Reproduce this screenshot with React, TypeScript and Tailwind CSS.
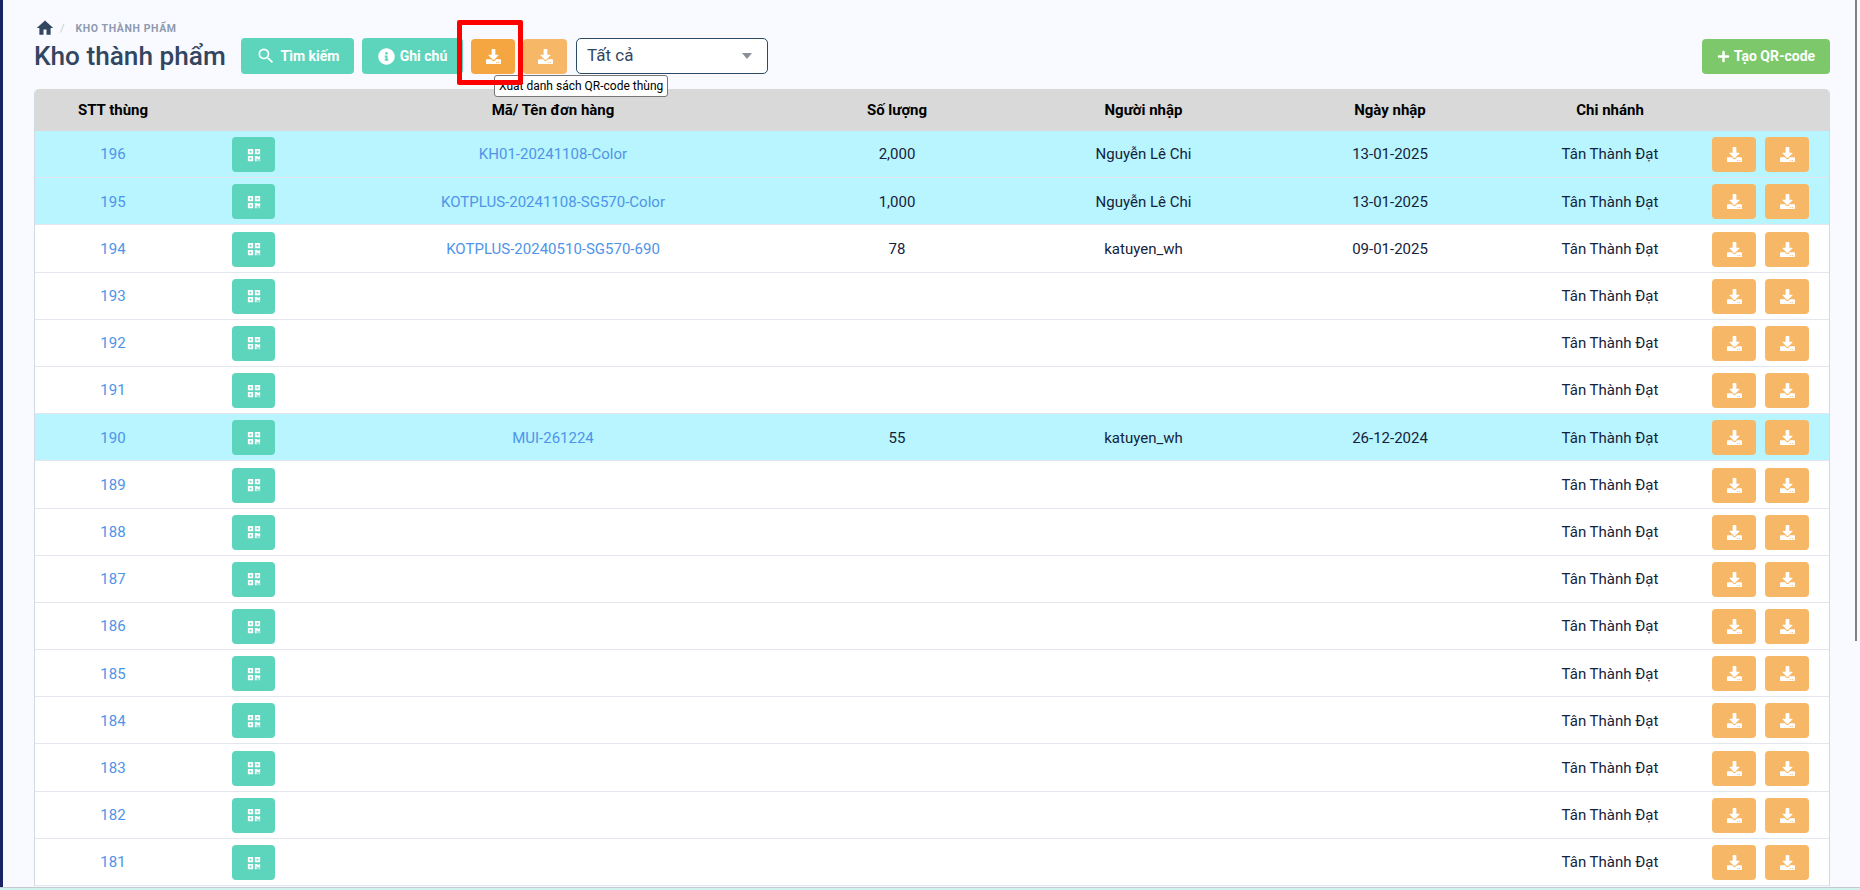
import { FaDownload, FaInfoCircle, FaPlus, FaQrcode } from 'react-icons/fa';
import { MdSearch } from 'react-icons/md';

const FONT = "font-['Roboto','Liberation_Sans',sans-serif]";

type Row = {
  stt: number;
  code?: string;
  qty?: string;
  user?: string;
  date?: string;
};

const rows: Row[] = [
  { stt: 196, code: 'KH01-20241108-Color', qty: '2,000', user: 'Nguyễn Lê Chi', date: '13-01-2025' },
  { stt: 195, code: 'KOTPLUS-20241108-SG570-Color', qty: '1,000', user: 'Nguyễn Lê Chi', date: '13-01-2025' },
  { stt: 194, code: 'KOTPLUS-20240510-SG570-690', qty: '78', user: 'katuyen_wh', date: '09-01-2025' },
  { stt: 193 },
  { stt: 192 },
  { stt: 191 },
  { stt: 190, code: 'MUI-261224', qty: '55', user: 'katuyen_wh', date: '26-12-2024' },
  { stt: 189 },
  { stt: 188 },
  { stt: 187 },
  { stt: 186 },
  { stt: 185 },
  { stt: 184 },
  { stt: 183 },
  { stt: 182 },
  { stt: 181 },
];

const isFilled = (r: Row) => r.stt === 196 || r.stt === 195 || r.stt === 190;

const GRID = 'grid grid-cols-[147px_143px_456px_232px_261px_232px_206px_117px]';

const HomeIcon = () => (
  <svg viewBox="0 0 24 24" className="h-[18px] w-[18px]" fill="#32465f">
    <path d="M10 21v-7h4v7h5.5v-9H23L12 2 1 12h3.5v9z" />
  </svg>
);

const TableRow = ({ row }: { row: Row }) => (
  <div
    className={`${GRID} h-[47.2px] items-center border-b border-[#e3e6ec] pt-[1.2px] text-[15px] text-[#14233c] ${
      isFilled(row) ? 'bg-[#b8f5ff]' : 'bg-white'
    }`}
  >
    <a className="pl-[9px] text-center text-[#4f94e8]">{row.stt}</a>
    <div className="flex justify-center">
      <button className="flex h-[35px] w-[43px] items-center justify-center rounded-[4px] bg-[#5dd5bc] text-white">
        <FaQrcode size={14} />
      </button>
    </div>
    <a className="text-center text-[#4f94e8]">{row.code}</a>
    <div className="text-center">{row.qty}</div>
    <div className="text-center">{row.user}</div>
    <div className="text-center">{row.date}</div>
    <div className="pl-[2px] text-center">Tân Thành Đạt</div>
    <div className="flex gap-[9px]">
      <button className="flex h-[35px] w-[44px] items-center justify-center rounded-[4px] bg-[#f6b767] text-white">
        <FaDownload size={15} />
      </button>
      <button className="flex h-[35px] w-[44px] items-center justify-center rounded-[4px] bg-[#f6b767] text-white">
        <FaDownload size={15} />
      </button>
    </div>
  </div>
);

export default function App() {
  return (
    <div className={`${FONT} relative flex h-[890px] w-[1860px] overflow-hidden bg-[#f9faff]`}>
      {/* thanh menu đã thu gọn */}
      <div className="h-full w-[3px] shrink-0 bg-[#1a2366]" />

      <div className="flex h-full w-[1852px] flex-col pl-[31px] pr-[25px]">
        <div className="flex h-[38px] items-end pb-[1px] pl-[2px]">
          <HomeIcon />
          <span className="ml-[6px] text-[11px] text-[#c3c9d3]">/</span>
          <span className="ml-[11px] text-[10.5px] font-bold tracking-[0.6px] text-[#8e9bb0]">KHO THÀNH PHẨM</span>
        </div>

        <div className="flex h-[36px] items-center">
          <h1 className="w-[207px] text-[26.2px] font-medium leading-none text-[#32465f]">Kho thành phẩm</h1>
          <button className="flex h-[36px] w-[113px] items-center justify-center gap-[5px] rounded-[4px] bg-[#5dd5bc] text-[14px] font-bold text-white">
            <MdSearch size={20} />
            Tìm kiếm
          </button>
          <button className="ml-[8px] flex h-[36px] w-[101px] items-center justify-center gap-[5px] rounded-[4px] bg-[#5dd5bc] text-[14px] font-bold text-white">
            <FaInfoCircle size={17} />
            Ghi chú
          </button>
          <button className="ml-[8px] flex h-[35px] w-[44px] items-center justify-center rounded-[4px] bg-[#f5a641] text-white">
            <FaDownload size={15} />
          </button>
          <button className="ml-[8px] flex h-[35px] w-[44px] items-center justify-center rounded-[4px] bg-[#f6b767] text-white">
            <FaDownload size={15} />
          </button>
          <div className="ml-[9px] flex h-[36px] w-[192px] items-center justify-between rounded-[5px] border border-[#2a4a66] bg-white pl-[10px] pr-[15px] text-[17px] text-[#32465f]">
            Tất cả
            <span className="h-0 w-0 border-x-[5px] border-t-[6px] border-x-transparent border-t-[#8a8f98]" />
          </div>
          <button className="ml-auto flex h-[35px] w-[128px] items-center justify-center gap-[4px] rounded-[4px] bg-[#7dc86a] text-[14px] font-bold text-white">
            <FaPlus size={13} />
            Tạo QR-code
          </button>
        </div>

        <div className="mt-[15px] w-[1796px] overflow-hidden rounded-t-[5px] border-x border-[#d4dae4]">
          <div className={`${GRID} h-[42px] items-center bg-[#d9d9d9] text-[15px] font-bold text-black`}>
            <div className="pl-[9px] text-center">STT thùng</div>
            <div />
            <div className="text-center">Mã/ Tên đơn hàng</div>
            <div className="text-center">Số lượng</div>
            <div className="text-center">Người nhập</div>
            <div className="text-center">Ngày nhập</div>
            <div className="pl-[2px] text-center">Chi nhánh</div>
            <div />
          </div>
          {rows.map((row) => (
            <TableRow key={row.stt} row={row} />
          ))}
        </div>
      </div>

      {/* thanh cuộn */}
      <div className="absolute right-[3px] top-0 h-[641px] w-[2px] bg-[#808080]" />

      {/* dải cuối trang */}
      <div className="absolute inset-x-0 bottom-0 h-[3px] border-t border-[#c4c9cf] bg-[#d5f3ee]" />

      {/* chú thích */}
      <div className="absolute left-[494px] top-[75px] z-10 whitespace-nowrap rounded-[3px] border border-[#767676] bg-white px-[4px] py-[2px] text-[12px] leading-[16px] text-black">
        Xuất danh sách QR-code thùng
      </div>
      {/* khung đỏ đánh dấu */}
      <div className="absolute left-[457px] top-[20px] z-20 h-[65px] w-[66px] rounded-[2px] border-[5px] border-[#fe0000]" />
    </div>
  );
}
